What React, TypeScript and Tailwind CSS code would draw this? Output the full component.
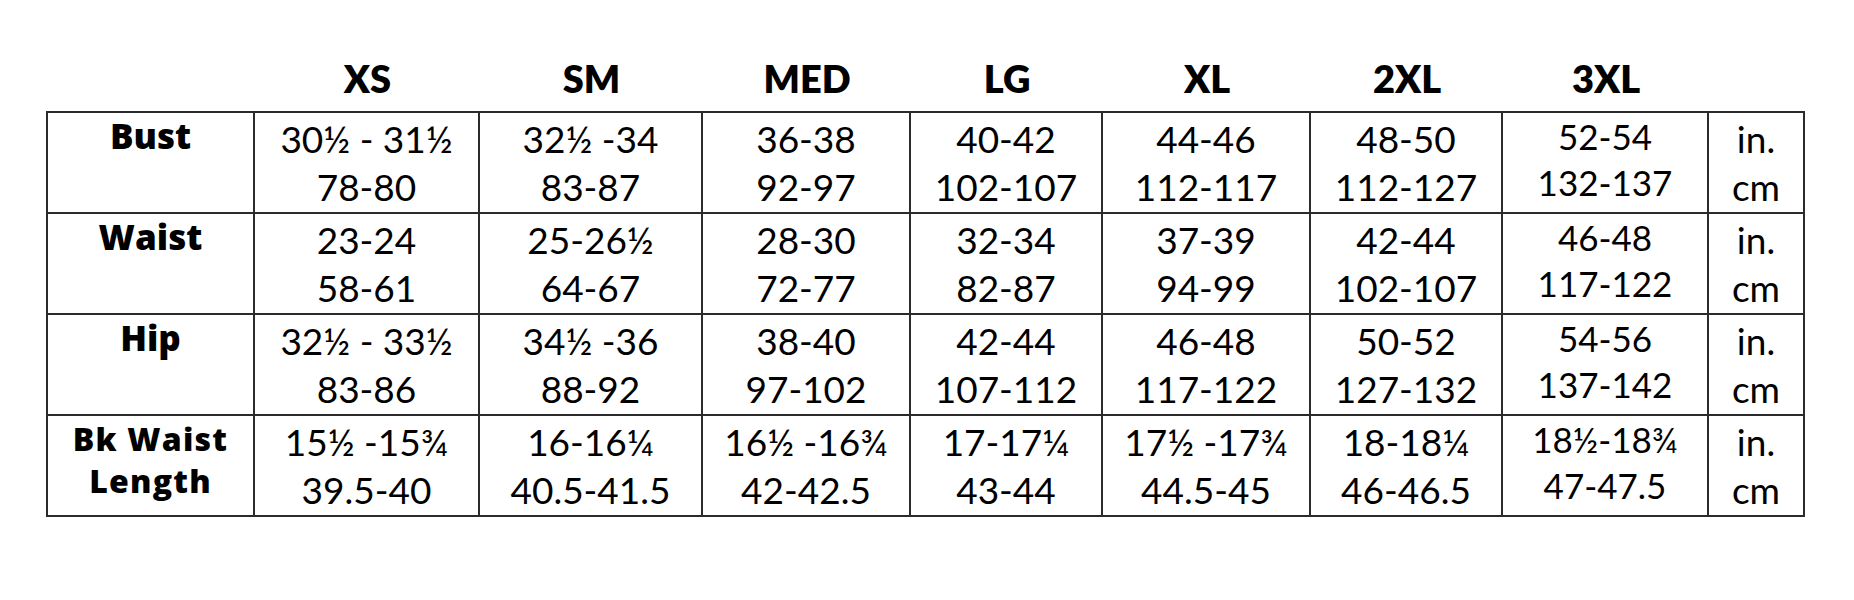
type Row = {
  label: string[];
  cells: [string, string][];
};

const sizes = ['XS', 'SM', 'MED', 'LG', 'XL', '2XL', '3XL'];

const rows: Row[] = [
  {
    label: ['Bust'],
    cells: [
      ['30½ - 31½', '78-80'],
      ['32½ -34', '83-87'],
      ['36-38', '92-97'],
      ['40-42', '102-107'],
      ['44-46', '112-117'],
      ['48-50', '112-127'],
      ['52-54', '132-137'],
    ],
  },
  {
    label: ['Waist'],
    cells: [
      ['23-24', '58-61'],
      ['25-26½', '64-67'],
      ['28-30', '72-77'],
      ['32-34', '82-87'],
      ['37-39', '94-99'],
      ['42-44', '102-107'],
      ['46-48', '117-122'],
    ],
  },
  {
    label: ['Hip'],
    cells: [
      ['32½ - 33½', '83-86'],
      ['34½ -36', '88-92'],
      ['38-40', '97-102'],
      ['42-44', '107-112'],
      ['46-48', '117-122'],
      ['50-52', '127-132'],
      ['54-56', '137-142'],
    ],
  },
  {
    label: ['Bk Waist', 'Length'],
    cells: [
      ['15½ -15¾', '39.5-40'],
      ['16-16¼', '40.5-41.5'],
      ['16½ -16¾', '42-42.5'],
      ['17-17¼', '43-44'],
      ['17½ -17¾', '44.5-45'],
      ['18-18¼', '46-46.5'],
      ['18½-18¾', '47-47.5'],
    ],
  },
];

const cols =
  'grid grid-cols-[207px_225px_223px_208px_192px_208px_192px_206px_96px]';

function Label({ lines }: { lines: string[] }) {
  const twoLine = lines.length > 1;
  return (
    <div
      className={
        twoLine
          ? "flex flex-col items-center border-r-2 border-b-2 border-[#2b2b2b] pt-[2px] font-['Open_Sans',sans-serif] text-[32px] leading-[42px] font-extrabold tracking-[1.2px]"
          : "flex flex-col items-center border-r-2 border-b-2 border-[#2b2b2b] pt-[1px] font-['Open_Sans',sans-serif] text-[35px] leading-[44px] font-extrabold"
      }
    >
      {lines.map((l) => (
        <span key={l}>{l}</span>
      ))}
    </div>
  );
}

function Cell({ top, bottom, small }: { top: string; bottom: string; small?: boolean }) {
  return (
    <div
      className={
        small
          ? 'flex flex-col items-center border-r-2 border-b-2 border-[#2b2b2b] pt-0 text-[35px] leading-[46px]'
          : 'flex flex-col items-center border-r-2 border-b-2 border-[#2b2b2b] pt-[2px] text-[37px] leading-[48px]'
      }
    >
      <span>{top}</span>
      <span>{bottom}</span>
    </div>
  );
}

export default function App() {
  return (
    <div className="h-[600px] w-[1854px] bg-white pl-[46px] font-['Lato',sans-serif] text-black">
      <div className={`${cols} h-[111px] pl-[2px] pt-[55px]`}>
        <div />
        {sizes.map((s) => (
          <div key={s} className="text-center text-[38px] leading-[46px] font-extrabold">
            {s}
          </div>
        ))}
        <div />
      </div>

      <div className={`${cols} w-max border-t-2 border-l-2 border-[#2b2b2b] [grid-auto-rows:101px]`}>
        {rows.map((row) => (
          <div key={row.label.join(' ')} className="contents">
            <Label lines={row.label} />
            {row.cells.map(([a, b], i) => (
              <Cell key={i} top={a} bottom={b} small={i === 6} />
            ))}
            <Cell top="in." bottom="cm" />
          </div>
        ))}
      </div>
    </div>
  );
}
